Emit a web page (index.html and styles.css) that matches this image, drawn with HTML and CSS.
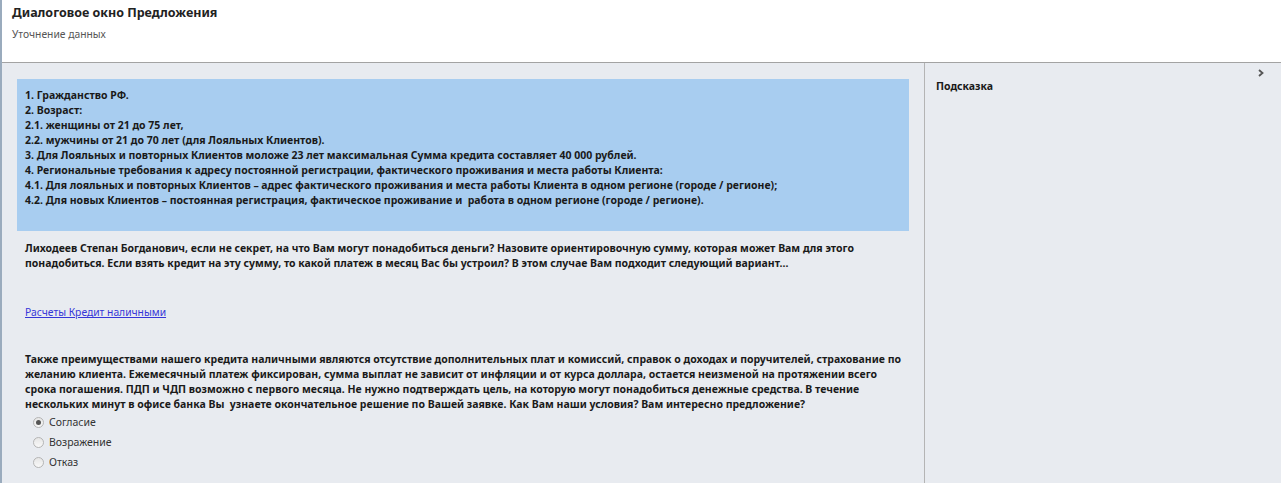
FILE: index.html
```html
<!DOCTYPE html>
<html lang="ru">
<head>
<meta charset="utf-8">
<link rel="stylesheet" href="styles.css">
</head>
<body>
<div class="app">
  <header class="header">
    <div class="title">Диалоговое окно Предложения</div>
    <div class="subtitle">Уточнение данных</div>
  </header>
  <div class="main">
    <section class="content">
      <div class="notice">
        <div>1. Гражданство РФ.</div>
        <div>2. Возраст:</div>
        <div>2.1. женщины от 21 до 75 лет,</div>
        <div>2.2. мужчины от 21 до 70 лет (для Лояльных Клиентов).</div>
        <div>3. Для Лояльных и повторных Клиентов моложе 23 лет максимальная Сумма кредита составляет 40 000 рублей.</div>
        <div>4. Региональные требования к адресу постоянной регистрации, фактического проживания и места работы Клиента:</div>
        <div>4.1. Для лояльных и повторных Клиентов – адрес фактического проживания и места работы Клиента в одном регионе (городе / регионе);</div>
        <div>4.2. Для новых Клиентов – постоянная регистрация, фактическое проживание и&nbsp; работа в одном регионе (городе / регионе).</div>
      </div>
      <p class="text first">Лиходеев Степан Богданович, если не секрет, на что Вам могут понадобиться деньги? Назовите ориентировочную сумму, которая может Вам для этого понадобиться. Если взять кредит на эту сумму, то какой платеж в месяц Вас бы устроил? В этом случае Вам подходит следующий вариант…</p>
      <a class="link" href="#">Расчеты Кредит наличными</a>
      <p class="text second">Также преимуществами нашего кредита наличными являются отсутствие дополнительных плат и комиссий, справок о доходах и поручителей, страхование по желанию клиента. Ежемесячный платеж фиксирован, сумма выплат не зависит от инфляции и от курса доллара, остается неизменой на протяжении всего срока погашения. ПДП и ЧДП возможно с первого месяца. Не нужно подтверждать цель, на которую могут понадобиться денежные средства. В течение нескольких минут в офисе банка Вы&nbsp; узнаете окончательное решение по Вашей заявке. Как Вам наши условия? Вам интересно предложение?</p>
      <div class="options">
        <label class="option"><span class="radio checked"></span>Согласие</label>
        <label class="option"><span class="radio"></span>Возражение</label>
        <label class="option"><span class="radio"></span>Отказ</label>
      </div>
    </section>
    <aside class="hint">
      <div class="hint-top">
        <svg class="chevron" width="8" height="8" viewBox="0 0 8 8"><path d="M2 1 L5.5 4 L2 7" fill="none" stroke="#555" stroke-width="1.8"/></svg>
      </div>
      <div class="hint-title">Подсказка</div>
    </aside>
  </div>
</div>
</body>
</html>
```

FILE: styles.css
```css
html, body {
  margin: 0;
  padding: 0;
  height: 100%;
  overflow: hidden;
}
body {
  font-family: "Noto Sans", "Open Sans", sans-serif;
  color: #1a1a1a;
}
.app {
  display: flex;
  flex-direction: column;
  height: 483px;
  border-left: 2px solid #9aabbd;
}
.header {
  height: 63px;
  box-sizing: border-box;
  background: #fff;
  border-bottom: 1px solid #a3a3a3;
  padding: 4px 10px 0 10px;
}
.title {
  font-size: 12.5px;
  font-weight: 700;
  line-height: 18px;
  color: #222;
}
.subtitle {
  font-size: 10.3px;
  line-height: 14px;
  margin-top: 5px;
  color: #555;
}
.main {
  flex: 1;
  display: flex;
  background: #e8ebf0;
  min-height: 0;
}
.content {
  width: 923px;
  box-sizing: border-box;
  border-right: 1px solid #b4b4b4;
  padding: 16px 15px 0 15px;
  display: flex;
  flex-direction: column;
  align-items: flex-start;
}
.notice {
  align-self: stretch;
  background: #a8cdf0;
  padding: 9px 8px 23px 8px;
  font-size: 10.5px;
  font-weight: 700;
  line-height: 15px;
}
.text {
  margin: 0;
  padding-left: 8px;
  font-size: 10.5px;
  font-weight: 700;
  line-height: 15px;
}
.text.first {
  margin-top: 10px;
}
.link {
  margin-top: 34px;
  margin-left: 8px;
  font-size: 10.3px;
  line-height: 15px;
  color: #3636d8;
}
.text.second {
  margin-top: 32px;
}
.options {
  display: flex;
  flex-direction: column;
  padding-left: 16px;
}
.option {
  display: flex;
  align-items: center;
  height: 20px;
  font-size: 10.5px;
  color: #333;
}
.radio {
  width: 11px;
  height: 11px;
  box-sizing: border-box;
  border-radius: 50%;
  border: 1px solid #b5b5b5;
  background: linear-gradient(#e6e6e6, #f8f8f8);
  margin-right: 5px;
  display: flex;
  align-items: center;
  justify-content: center;
}
.radio.checked::after {
  content: "";
  width: 5px;
  height: 5px;
  border-radius: 50%;
  background: #555;
}
.hint {
  flex: 1;
  padding: 6px 16px 0 11px;
  display: flex;
  flex-direction: column;
}
.hint-top {
  display: flex;
  justify-content: flex-end;
  height: 10px;
}
.chevron {
  display: block;
}
.hint-title {
  font-size: 10.5px;
  font-weight: 700;
  line-height: 15px;
  margin-top: 0px;
}
```
